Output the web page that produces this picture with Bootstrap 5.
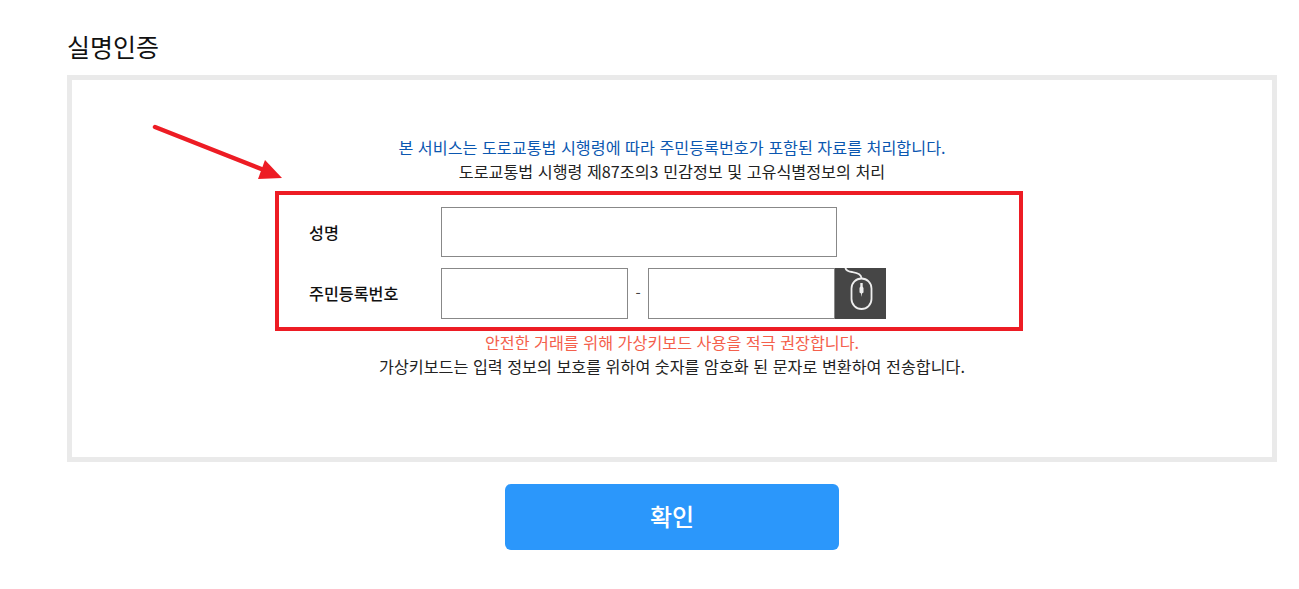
<!doctype html>
<html lang="ko"><head><meta charset="utf-8"><title>실명인증</title>
<link rel="stylesheet" href="https://cdn.jsdelivr.net/npm/bootstrap@5.3.0/dist/css/bootstrap.min.css">
<style>
html,body{background:#fff;overflow:hidden}
body{font-family:"Noto Sans CJK KR","Liberation Sans",sans-serif;color:#222;height:589px}
.page-wrap{padding:29px 22px 0 67px}
.page-title{font-size:25px;font-weight:400;line-height:34px;margin:0 0 12px;color:#111}
.auth-box{position:relative;height:387px;border:5px solid #eaeaea;padding-top:55px}
.msg{font-size:16.2px;line-height:24px;text-align:center;margin:0}
.msg-blue{color:#0b57b0}
.msg-red{color:#f4604c}
.red-frame{width:748px;height:140px;margin:8px 0 0 203px;border:4px solid #ed1c24;padding:12px 0 0 30px}
.frow{height:50px}
.frow+.frow{margin-top:11px}
.flabel{width:132px;font-size:16.2px;font-weight:500;color:#111}
.finput{height:50px;border:1px solid #888;border-radius:0;padding:0 8px;background:#fff}
.finput-tall{height:51px}
.w-full{width:396px}
.w-part{width:187px}
.dash{width:20px;text-align:center;font-size:15px;color:#444}
.mouse-btn{width:51px;height:51px;background:#464646;display:block;flex:none}
.after-frame{margin-top:-1px}
.arrow{position:absolute;left:75px;top:40px;width:140px;height:65px}
.confirm-wrap{margin-top:22px}
.confirm-btn{width:334px;height:66px;background:#2b97fb;border:0;border-radius:6px;color:#fff;font-size:24px;font-weight:500;padding:0 0 2px}
.confirm-btn:hover{background:#2b97fb;color:#fff}
</style></head>
<body>
<div class="page-wrap">
  <h1 class="page-title">실명인증</h1>
  <div class="auth-box">
    <svg class="arrow" viewBox="0 0 140 65" aria-hidden="true">
      <line x1="8" y1="7" x2="122" y2="52" stroke="#ed1c24" stroke-width="4.500" stroke-linecap="round"/>
      <polygon points="118,40 135,58 111,59" fill="#ed1c24"/>
    </svg>
    <p class="msg msg-blue">본 서비스는 도로교통법 시행령에 따라 주민등록번호가 포함된 자료를 처리합니다.</p>
    <p class="msg">도로교통법 시행령 제87조의3 민감정보 및 고유식별정보의 처리</p>
    <div class="red-frame">
      <div class="frow d-flex align-items-center">
        <label class="flabel" for="nm">성명</label>
        <input id="nm" class="finput w-full" type="text">
      </div>
      <div class="frow d-flex align-items-start">
        <label class="flabel align-self-center" for="r1">주민등록번호</label>
        <input id="r1" class="finput finput-tall w-part" type="text">
        <span class="dash align-self-center">-</span>
        <input id="r2" class="finput finput-tall w-part" type="password">
        <svg class="mouse-btn" viewBox="0 0 51 51" role="img" aria-label="가상키보드">
          <rect width="51" height="51" fill="#464646"/>
          <g fill="none" stroke="#eee" stroke-width="1.800" stroke-linecap="round">
            <path d="M10.500 0c.5 3 3 3.500 6.500 4s9 1 9.500 6"/>
            <rect x="16.500" y="10.500" width="20" height="30.500" rx="10"/>
          </g>
          <path d="M25.300 15h2.400v3.500l.8 1.500v4.500l-1.500 1-.4 3h-.2l-.4-3-1.500-1V20l.8-1.500z" fill="#eee"/>
        </svg>
      </div>
    </div>
    <div class="after-frame">
      <p class="msg msg-red">안전한 거래를 위해 가상키보드 사용을 적극 권장합니다.</p>
      <p class="msg">가상키보드는 입력 정보의 보호를 위하여 숫자를 암호화 된 문자로 변환하여 전송합니다.</p>
    </div>
  </div>
  <div class="confirm-wrap d-flex justify-content-center">
    <button class="btn confirm-btn" type="button">확인</button>
  </div>
</div>
<script src="https://cdn.jsdelivr.net/npm/bootstrap@5.3.0/dist/js/bootstrap.bundle.min.js"></script>
</body></html>
